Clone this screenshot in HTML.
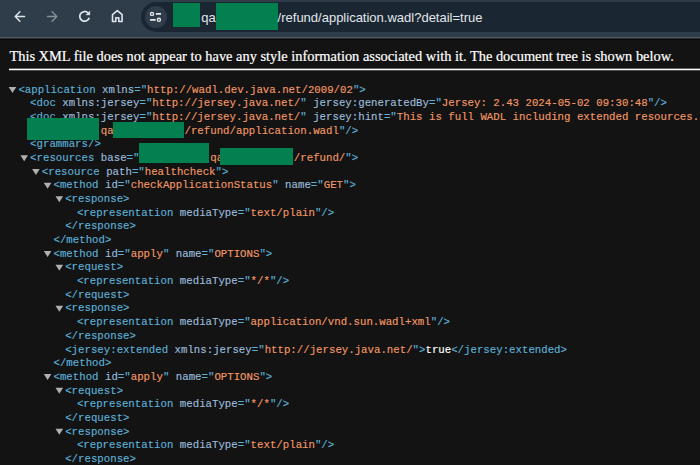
<!DOCTYPE html>
<html><head><meta charset="utf-8">
<style>
html,body{margin:0;padding:0;}
body{width:700px;height:465px;overflow:hidden;background:#131313;position:relative;}
#tb{position:absolute;left:0;top:0;width:700px;height:37px;background:#2f3d4a;}
#tbline{position:absolute;left:0;top:37px;width:700px;height:1px;background:#55595e;box-shadow:0 1px 0 #2c2e31;}
#tbdark{position:absolute;left:0;top:39px;width:700px;height:1px;background:#0a0a0a;}
#omni{position:absolute;left:140.7px;top:2px;width:600px;height:29.5px;border-radius:15px;background:#1a2733;}
#tune{position:absolute;left:144.8px;top:5.7px;width:22.6px;height:22.6px;border-radius:50%;background:#303c4a;}
.ic{position:absolute;top:0;left:0;}
.url{position:absolute;top:9.8px;font-family:"Liberation Sans",sans-serif;font-size:13px;color:#e3e6ea;white-space:pre;line-height:16px;}
.g{position:absolute;background:#02804f;}
#hdr{position:absolute;left:9.4px;top:46.8px;font-family:"Liberation Serif",serif;font-size:14.42px;color:#fff;-webkit-text-stroke:0.2px #fff;white-space:pre;line-height:18px;}
#hline{position:absolute;left:9px;top:69px;width:700px;height:1px;background:#fff;box-shadow:0 -1px 0 rgba(255,255,255,0.35),0 1px 0 rgba(255,255,255,0.25);}
.ln{position:absolute;font-family:"Liberation Mono",monospace;font-size:10.72px;line-height:13.67px;height:13.67px;white-space:pre;color:#e8eaed;-webkit-text-stroke:0.15px currentColor;}
.t{color:#5db0d7;}
.a{color:#9bbbdc;}
.v{color:#f29766;}
.w{color:#ffffff;}
.tri{position:absolute;width:0;height:0;border-left:3.3px solid transparent;border-right:3.3px solid transparent;border-top:5.8px solid #b3b3b3;}
</style></head><body>
<div id="tb"></div>
<div id="tbline"></div>
<div id="tbdark"></div>
<svg class="ic" width="700" height="37" viewBox="0 0 700 37">
  <g fill="none" stroke="#dfe5ec" stroke-width="1.45" stroke-linecap="round" stroke-linejoin="round">
    <path d="M15.2 16.5 H24.6 M19.9 11.8 L15.2 16.5 L19.9 21.2"/>
  </g>
  <g fill="none" stroke="#868e96" stroke-width="1.45" stroke-linecap="round" stroke-linejoin="round">
    <path d="M47.5 16.5 H56.8 M52.1 11.8 L56.8 16.5 L52.1 21.2"/>
  </g>
  <g fill="none" stroke="#dfe5ec" stroke-width="1.75" stroke-linecap="butt" stroke-linejoin="round">
    <path d="M88.1 13.0 A4.85 4.85 0 1 0 89.25 17.7"/>
    <path d="M112.5 21.5 V14.6 L117.3 10.7 L122.1 14.6 V21.5 H118.8 V17.7 H115.8 V21.5 Z" stroke-width="1.6"/>
  </g>
  <path d="M89.9 10.9 V14.9 H85.9 Z" fill="#dfe5ec" stroke="#dfe5ec" stroke-width="0.4" stroke-linejoin="round"/>
</svg>
<div id="omni"></div>
<div id="tune"></div>
<svg class="ic" width="700" height="37" viewBox="0 0 700 37">
  <g fill="none" stroke="#e8ecf0" stroke-width="1.35">
    <circle cx="152" cy="13.9" r="1.55"/>
    <circle cx="158.9" cy="19.8" r="1.55"/>
  </g>
  <g stroke="#e8ecf0" stroke-width="1.7" stroke-linecap="butt">
    <path d="M155.9 13.95 H161 M150.1 19.85 H155.6"/>
  </g>
</svg>
<div class="g" style="left:173.2px;top:3.2px;width:27px;height:23.6px;"></div>
<div class="url" style="left:201.2px;">qa</div>
<div class="g" style="left:216.2px;top:3.2px;width:62px;height:26.6px;"></div>
<div class="url" style="left:277.6px;">/refund/application.wadl?detail=true</div>

<div id="hdr">This XML file does not appear to have any style information associated with it. The document tree is shown below.</div>
<div id="hline"></div>

<div id="code">
<div class="ln" style="left:18.40px;top:83.77px"><span class="t">&lt;application</span> <span class="a">xmlns</span><span class="t">="</span><span class="v">http://wadl.dev.java.net/2009/02</span><span class="t">"&gt;</span></div>
<div class="ln" style="left:30.10px;top:97.44px"><span class="t">&lt;doc</span> <span class="a">xmlns:jersey</span><span class="t">="</span><span class="v">http://jersey.java.net/</span><span class="t">"</span> <span class="a">jersey:generatedBy</span><span class="t">="</span><span class="v">Jersey: 2.43 2024-05-02 09:30:48</span><span class="t">"/&gt;</span></div>
<div class="ln" style="left:30.10px;top:111.11px"><span class="t">&lt;doc</span> <span class="a">xmlns:jersey</span><span class="t">="</span><span class="v">http://jersey.java.net/</span><span class="t">"</span> <span class="a">jersey:hint</span><span class="t">="</span><span class="v">This is full WADL including extended resources. To get</span></div>
<div class="ln" style="left:30.10px;top:124.77px"><span class="v">           qa           </span><span class="v">/refund/application.wadl</span><span class="t">"/&gt;</span></div>
<div class="ln" style="left:30.10px;top:138.44px"><span class="t">&lt;grammars/&gt;</span></div>
<div class="ln" style="left:30.10px;top:152.11px"><span class="t">&lt;resources</span> <span class="a">base</span><span class="t">="</span><span class="v">           qa           /refund/</span><span class="t">"&gt;</span></div>
<div class="ln" style="left:41.80px;top:165.78px"><span class="t">&lt;resource</span> <span class="a">path</span><span class="t">="</span><span class="v">healthcheck</span><span class="t">"&gt;</span></div>
<div class="ln" style="left:53.50px;top:179.45px"><span class="t">&lt;method</span> <span class="a">id</span><span class="t">="</span><span class="v">checkApplicationStatus</span><span class="t">"</span> <span class="a">name</span><span class="t">="</span><span class="v">GET</span><span class="t">"&gt;</span></div>
<div class="ln" style="left:65.20px;top:193.12px"><span class="t">&lt;response&gt;</span></div>
<div class="ln" style="left:76.90px;top:206.79px"><span class="t">&lt;representation</span> <span class="a">mediaType</span><span class="t">="</span><span class="v">text/plain</span><span class="t">"/&gt;</span></div>
<div class="ln" style="left:65.20px;top:220.46px"><span class="t">&lt;/response&gt;</span></div>
<div class="ln" style="left:53.50px;top:234.13px"><span class="t">&lt;/method&gt;</span></div>
<div class="ln" style="left:53.50px;top:247.80px"><span class="t">&lt;method</span> <span class="a">id</span><span class="t">="</span><span class="v">apply</span><span class="t">"</span> <span class="a">name</span><span class="t">="</span><span class="v">OPTIONS</span><span class="t">"&gt;</span></div>
<div class="ln" style="left:65.20px;top:261.48px"><span class="t">&lt;request&gt;</span></div>
<div class="ln" style="left:76.90px;top:275.15px"><span class="t">&lt;representation</span> <span class="a">mediaType</span><span class="t">="</span><span class="v">*/*</span><span class="t">"/&gt;</span></div>
<div class="ln" style="left:65.20px;top:288.81px"><span class="t">&lt;/request&gt;</span></div>
<div class="ln" style="left:65.20px;top:302.49px"><span class="t">&lt;response&gt;</span></div>
<div class="ln" style="left:76.90px;top:316.16px"><span class="t">&lt;representation</span> <span class="a">mediaType</span><span class="t">="</span><span class="v">application/vnd.sun.wadl+xml</span><span class="t">"/&gt;</span></div>
<div class="ln" style="left:65.20px;top:329.82px"><span class="t">&lt;/response&gt;</span></div>
<div class="ln" style="left:65.20px;top:343.50px"><span class="t">&lt;jersey:extended</span> <span class="a">xmlns:jersey</span><span class="t">="</span><span class="v">http://jersey.java.net/</span><span class="t">"&gt;</span><span class="w">true</span><span class="t">&lt;/jersey:extended&gt;</span></div>
<div class="ln" style="left:53.50px;top:357.17px"><span class="t">&lt;/method&gt;</span></div>
<div class="ln" style="left:53.50px;top:370.83px"><span class="t">&lt;method</span> <span class="a">id</span><span class="t">="</span><span class="v">apply</span><span class="t">"</span> <span class="a">name</span><span class="t">="</span><span class="v">OPTIONS</span><span class="t">"&gt;</span></div>
<div class="ln" style="left:65.20px;top:384.51px"><span class="t">&lt;request&gt;</span></div>
<div class="ln" style="left:76.90px;top:398.18px"><span class="t">&lt;representation</span> <span class="a">mediaType</span><span class="t">="</span><span class="v">*/*</span><span class="t">"/&gt;</span></div>
<div class="ln" style="left:65.20px;top:411.84px"><span class="t">&lt;/request&gt;</span></div>
<div class="ln" style="left:65.20px;top:425.52px"><span class="t">&lt;response&gt;</span></div>
<div class="ln" style="left:76.90px;top:439.19px"><span class="t">&lt;representation</span> <span class="a">mediaType</span><span class="t">="</span><span class="v">text/plain</span><span class="t">"/&gt;</span></div>
<div class="ln" style="left:65.20px;top:452.85px"><span class="t">&lt;/response&gt;</span></div>
<svg style="position:absolute;left:0;top:0" width="700" height="465"><g fill="#b0b0b0"><polygon points="8.70,87.00 16.30,87.00 12.50,93.00"/><polygon points="20.40,155.35 28.00,155.35 24.20,161.35"/><polygon points="32.10,169.02 39.70,169.02 35.90,175.02"/><polygon points="43.80,182.69 51.40,182.69 47.60,188.69"/><polygon points="55.50,196.36 63.10,196.36 59.30,202.36"/><polygon points="43.80,251.04 51.40,251.04 47.60,257.04"/><polygon points="55.50,264.71 63.10,264.71 59.30,270.71"/><polygon points="55.50,305.72 63.10,305.72 59.30,311.72"/><polygon points="43.80,374.07 51.40,374.07 47.60,380.07"/><polygon points="55.50,387.74 63.10,387.74 59.30,393.74"/><polygon points="55.50,428.75 63.10,428.75 59.30,434.75"/></g></svg>
<div class="g" style="left:27.1px;top:118.4px;width:72.2px;height:21.5px"></div>
<div class="g" style="left:113.1px;top:121.7px;width:70.9px;height:16.3px"></div>
<div class="g" style="left:139px;top:142.9px;width:69.9px;height:20px"></div>
<div class="g" style="left:220.1px;top:148px;width:72.5px;height:16.7px"></div>
</div>
</body></html>
